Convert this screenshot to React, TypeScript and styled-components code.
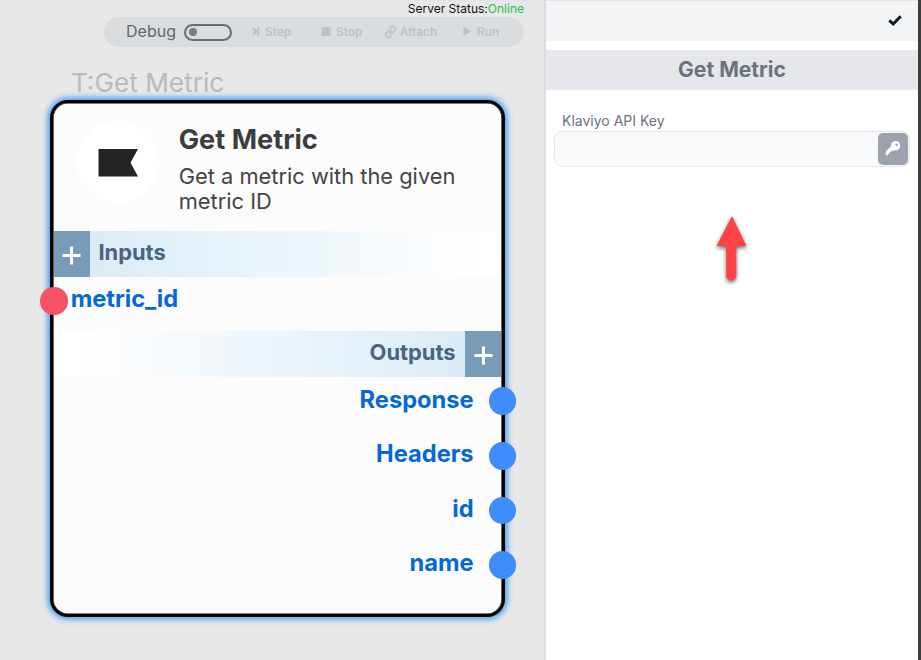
import React from 'react';
import styled, { createGlobalStyle } from 'styled-components';

const GlobalStyle = createGlobalStyle`
  *, *::before, *::after { box-sizing: border-box; }
  body { margin: 0; font-family: Inter, sans-serif; background: #e8e8e8; overflow: hidden; }
`;

const Page = styled.div`
  display: grid;
  grid-template-columns: 544px 1fr 3px;
  height: 660px;
`;

const Canvas = styled.main`
  position: relative;
  background: #e8e8e8;
  border-top: 1px solid #e3e3e9;
`;

const TopArea = styled.div`
  display: flex;
  flex-direction: column;
  align-items: flex-end;
  padding-right: 20px;
`;

const Status = styled.div`
  height: 16px;
  line-height: 16px;
  font-size: 12px;
  color: #111;
`;

const Online = styled.span`
  color: #1fbf48;
`;

const Toolbar = styled.div`
  display: flex;
  align-items: center;
  width: 420px;
  height: 30px;
  padding-left: 22px;
  border-radius: 15px;
  background: #d9dde0;
`;

const DebugLabel = styled.span`
  width: 58px;
  margin-top: -2px;
  font-size: 16px;
  line-height: 20px;
  color: #666;
`;

const Toggle = styled.span`
  display: flex;
  align-items: center;
  width: 48px;
  height: 17px;
  margin-right: 20px;
  padding-left: 3px;
  border: 2px solid #6c6c6c;
  border-radius: 9px;
`;

const Knob = styled.i`
  width: 8px;
  height: 8px;
  border-radius: 50%;
  background: #7c7c7c;
`;

const Action = styled.button<{ $width: number; $gap: number }>`
  display: flex;
  align-items: center;
  gap: ${(p) => p.$gap}px;
  width: ${(p) => p.$width}px;
  padding: 0;
  border: 0;
  background: none;
  font: 600 11.8px/16px Inter, sans-serif;
  color: #c0c1c2;
  svg { flex: none; }
`;

const Node = styled.section`
  position: absolute;
  left: 50px;
  top: 99px;
  width: 455px;
  height: 517px;
  padding: 0 0.7px;
  border: 3px solid #000;
  border-radius: 18px;
  background: #fcfcfc;
  box-shadow: 0 0 6px 2px #3494f5, inset 0 0 0 0.6px #000;
`;

const NodeTag = styled.div`
  position: absolute;
  left: 71px;
  top: 66px;
  font-size: 26.2px;
  line-height: 32px;
  color: #bababa;
  white-space: nowrap;
`;

const NodeHeader = styled.header`
  display: flex;
  height: 128px;
  padding: 18px 20px 0 23px;
`;

const Logo = styled.div`
  display: flex;
  flex: none;
  align-items: center;
  justify-content: center;
  width: 82px;
  height: 82px;
  margin-right: 20px;
  padding: 1px 0 0 1px;
  border-radius: 50%;
  background: #fff;
`;

const NodeTitle = styled.h2`
  margin: 1px 0 6px;
  font-size: 27.2px;
  font-weight: 700;
  line-height: 36px;
  color: #3d3d3d;
`;

const NodeText = styled.p`
  margin: 0;
  font-size: 21.85px;
  line-height: 25px;
  color: #444;
`;

const Bar = styled.div<{ $end?: boolean }>`
  display: flex;
  flex-direction: ${(p) => (p.$end ? 'row-reverse' : 'row')};
  height: 45.5px;
  background: linear-gradient(${(p) => (p.$end ? 'to left' : 'to right')}, #daebf7 8%, #e6f2fa 35%, #fff 95%);
`;

const Add = styled.button`
  display: flex;
  align-items: center;
  justify-content: center;
  width: 36px;
  padding: 4px 0 0;
  border: 0;
  background: #789cb8;
`;

const BarTitle = styled.h3<{ $end?: boolean }>`
  margin: ${(p) => (p.$end ? '0 9.7px' : '0 8.7px')};
  font-size: 21.9px;
  font-weight: 700;
  line-height: 42px;
  color: #496580;
`;

const Ports = styled.div`
  display: flex;
  flex-direction: column;
`;

const Port = styled.div<{ $out?: boolean }>`
  display: flex;
  flex-direction: ${(p) => (p.$out ? 'row-reverse' : 'row')};
  align-items: center;
  height: 54.6px;
  padding-bottom: 5.4px;
  margin: ${(p) => (p.$out ? '0 -15px 0 0' : '0 0 0 -13.5px')};
`;

const Dot = styled.i<{ $out?: boolean }>`
  width: 27.5px;
  height: 27.5px;
  border-radius: 50%;
  background: ${(p) => (p.$out ? '#3f8cfd' : '#f65164')};
`;

const PortName = styled.span<{ $out?: boolean }>`
  margin: ${(p) => (p.$out ? '0 15.2px 3.2px 0' : '0 0 4px 3px')};
  font-size: 23.65px;
  font-weight: 700;
  line-height: 30px;
  color: #0568d9;
`;

const Sidebar = styled.aside`
  display: flex;
  flex-direction: column;
  border-left: 2px solid #d9dce1;
  background: #fff;
`;

const SideHeader = styled.header`
  display: flex;
  align-items: center;
  justify-content: flex-end;
  height: 41px;
  margin-bottom: 9px;
  padding: 0 15px 2px 0;
  border-top: 1px solid #e2e4e9;
  background: #f3f4f6;
`;

const SideTitle = styled.h1`
  height: 40px;
  margin: 0;
  background: #e5e7eb;
  font-size: 21.1px;
  font-weight: 700;
  line-height: 40px;
  text-align: center;
  color: #6b7280;
`;

const Field = styled.label`
  display: flex;
  flex-direction: column;
  padding: 21px 8px 0;
  font-size: 14px;
  line-height: 20px;
  color: #6b7280;
`;

const FieldName = styled.span`
  padding-left: 8px;
`;

const InputBox = styled.div`
  display: flex;
  align-items: center;
  height: 36px;
  padding-right: 1px;
  border: 1px solid #e5e7eb;
  border-radius: 8px;
  background: #f9fafb;
`;

const Input = styled.input`
  flex: 1;
  min-width: 0;
  border: 0;
  outline: 0;
  background: transparent;
`;

const KeyButton = styled.button`
  display: flex;
  align-items: center;
  justify-content: center;
  width: 30px;
  height: 32px;
  padding: 0 0 3px;
  border: 0;
  border-radius: 5px;
  background: #9ca3af;
`;

const Edge = styled.div`
  background: #3b3e3c;
`;

const Pointer = styled.svg`
  position: absolute;
  left: 708px;
  top: 208px;
`;

const PointerShape = styled.path`
  filter: drop-shadow(0 2px 2px rgba(0, 0, 0, 0.6));
`;

const Plus = () => (
  <svg width="19" height="19" viewBox="0 0 19 19">
    <path d="M9.5 .5v18M.5 9.5h18" stroke="#fff" strokeWidth="3" />
  </svg>
);

const outputs = ['Response', 'Headers', 'id', 'name'];

export default function App() {
  return (
    <>
      <GlobalStyle />
      <Page>
        <Canvas>
          <TopArea>
            <Status>Server Status:<Online>Online</Online></Status>
            <Toolbar>
              <DebugLabel>Debug</DebugLabel>
              <Toggle><Knob /></Toggle>
              <Action $width={69} $gap={4}>
                <svg width="9" height="10" viewBox="0 0 9 10">
                  <path d="M1 0l4.500 3.800V0H7.200v9H5.500V5.200L1 9V6l1.500-1.500L1 3z" fill="currentColor" />
                </svg>
                Step
              </Action>
              <Action $width={63} $gap={5}>
                <svg width="10" height="10" viewBox="0 0 10 10">
                  <path d="M.5 0h9v9h-9z" fill="currentColor" />
                </svg>
                Stop
              </Action>
              <Action $width={79} $gap={3}>
                <svg width="13" height="14" viewBox="0 0 24 24" fill="none" stroke="currentColor" strokeWidth="3" strokeLinecap="round">
                  <g transform="rotate(-10 12 12)">
                    <path d="M10 13a5 5 0 0 0 7.500.5l3-3a5 5 0 0 0-7-7L11.800 5.200" />
                    <path d="M14 11a5 5 0 0 0-7.500-.5l-3 3a5 5 0 0 0 7 7l1.700-1.700" />
                  </g>
                </svg>
                Attach
              </Action>
              <Action $width={44} $gap={5}>
                <svg width="9" height="10" viewBox="0 0 9 10">
                  <path d="M.5 0l8 4.500-8 4.500z" fill="currentColor" />
                </svg>
                Run
              </Action>
            </Toolbar>
          </TopArea>
          <NodeTag>T:Get Metric</NodeTag>
          <Node>
            <NodeHeader>
              <Logo>
                <svg width="41" height="28" viewBox="0 0 41 28">
                  <path d="M.5 0H40L32.500 13.800 40 27.500H.5z" fill="#232426" />
                </svg>
              </Logo>
              <div>
                <NodeTitle>Get Metric</NodeTitle>
                <NodeText>Get a metric with the given metric ID</NodeText>
              </div>
            </NodeHeader>
            <Bar>
              <Add aria-label="Add input"><Plus /></Add>
              <BarTitle>Inputs</BarTitle>
            </Bar>
            <Ports>
              <Port>
                <Dot />
                <PortName>metric_id</PortName>
              </Port>
            </Ports>
            <Bar $end>
              <Add aria-label="Add output"><Plus /></Add>
              <BarTitle $end>Outputs</BarTitle>
            </Bar>
            <Ports>
              {outputs.map((name) => (
                <Port key={name} $out>
                  <Dot $out />
                  <PortName $out>{name}</PortName>
                </Port>
              ))}
            </Ports>
          </Node>
        </Canvas>
        <Sidebar>
          <SideHeader>
            <svg width="16" height="16" viewBox="0 0 16 16">
              <path d="M2.300 8.300L6.200 12 13.700 4.200" fill="none" stroke="#111827" strokeWidth="3" />
            </svg>
          </SideHeader>
          <SideTitle>Get Metric</SideTitle>
          <Field>
            <FieldName>Klaviyo API Key</FieldName>
            <InputBox>
              <Input />
              <KeyButton aria-label="Use secret">
                <svg width="16" height="16" viewBox="0 0 16 16">
                  <path
                    d="M10.600 1C7.700 1 5.700 3.300 6 6.200L.9 11.500 .6 15 2.200 15.400 4.500 12.800 6.300 11.200 8.600 10.200C11.500 11.200 15.200 9.300 15.200 5.700 15.200 3 13.300 1 10.600 1zM11.600 3.400a1.300 1.300 0 1 1 0 2.600 1.300 1.300 0 0 1 0-2.600z"
                    fill="#fff"
                    fillRule="evenodd"
                  />
                </svg>
              </KeyButton>
            </InputBox>
          </Field>
        </Sidebar>
        <Edge />
      </Page>
      <Pointer width="48" height="84" viewBox="0 0 48 84">
        <PointerShape d="M24 8L38.500 38H28.200V67.500a5 5 0 0 1-10 0V38H8.500z" fill="#ff4245" />
      </Pointer>
    </>
  );
}
